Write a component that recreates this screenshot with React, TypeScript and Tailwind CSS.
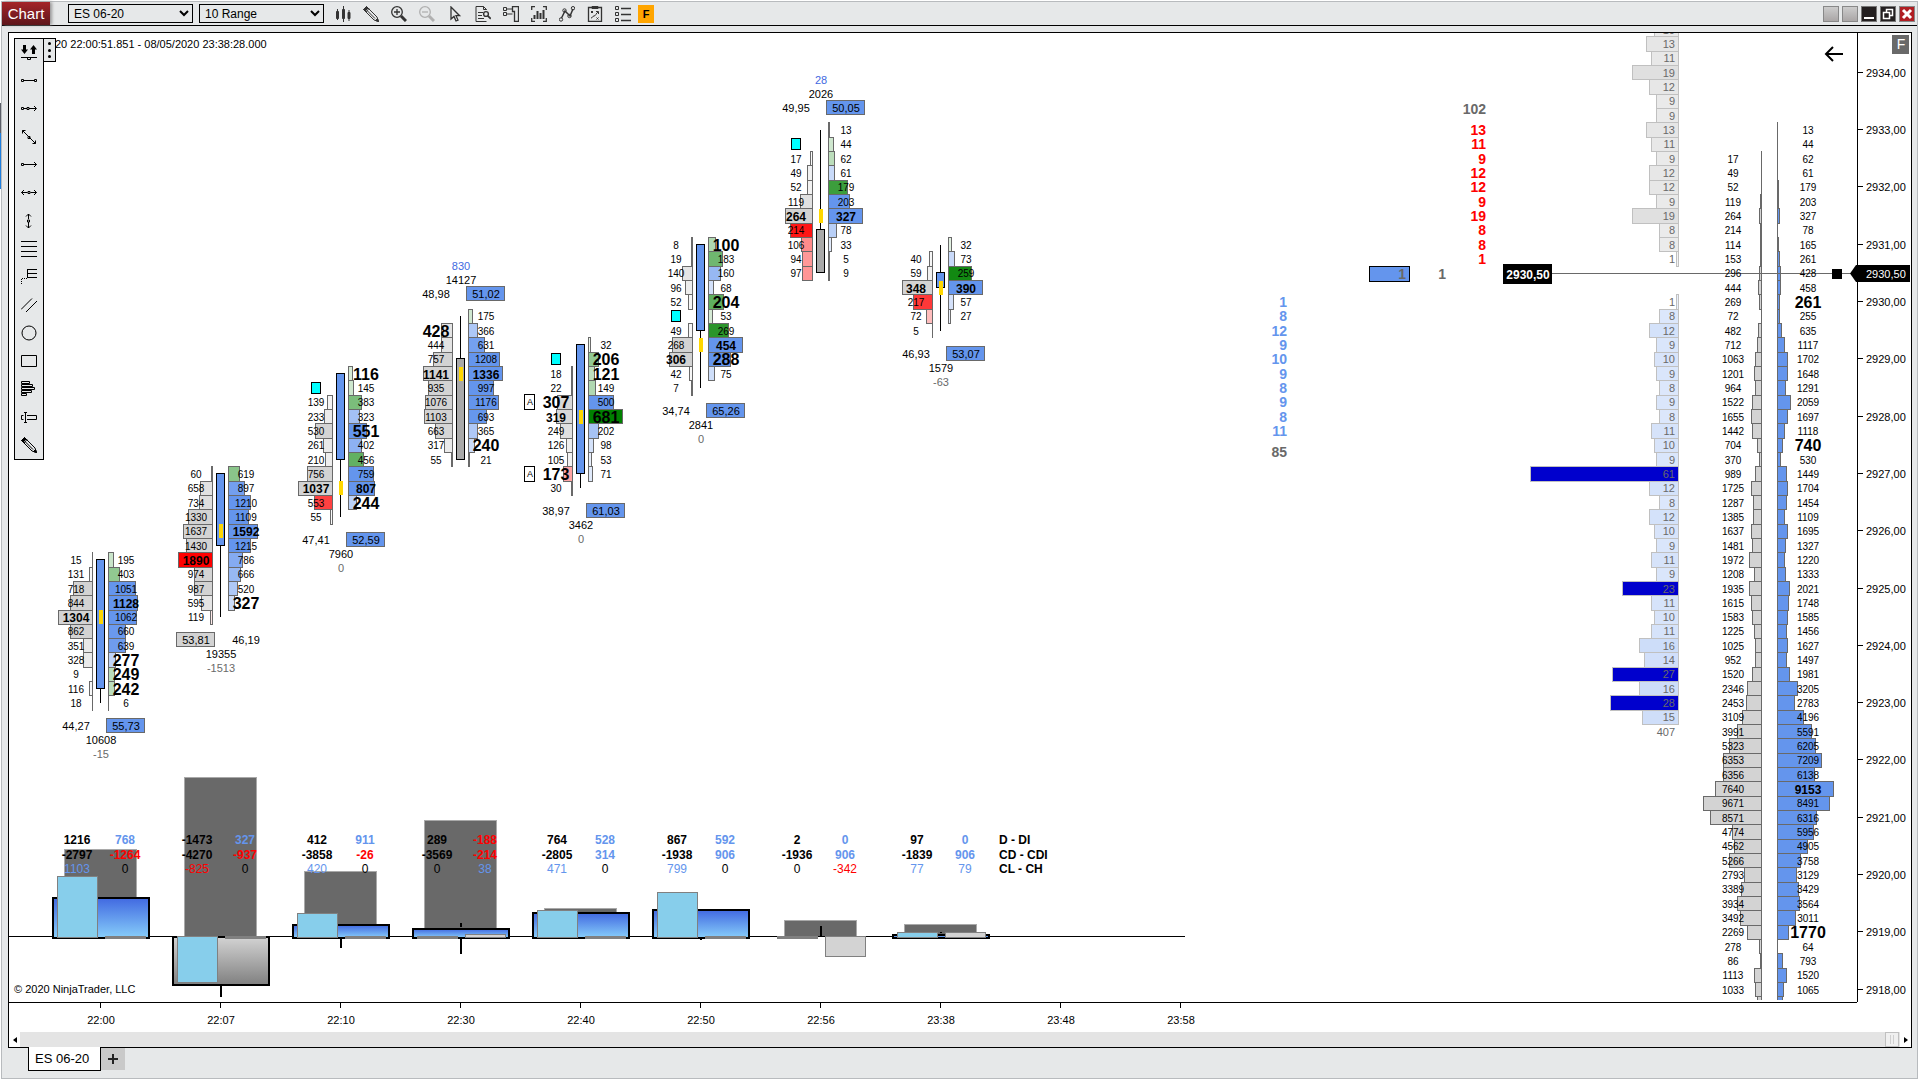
import type { ReactNode } from 'react'

const TICK = 14.328
const rowY = (t: number) => Math.round(72.7 + TICK * t)
const rowTop = (t: number) => Math.floor(72.7 + TICK * (t - 0.5)) + 0.5
const rowH = (t: number) => rowTop(t + 1) - rowTop(t)

// Cell codes: value followed by flags. g = green, r = red, M = bold, L = large bold
type Bar = {
  x: number
  time: string
  bidStart: number
  bid: string
  askStart: number
  ask: string
  body: [number, number]
  wick: [number, number]
  down?: boolean
  poc: number
  cyan?: number
  marks?: number[]
  labelsOnTop?: boolean
  pct: [string, string]
  volume: number
  diff: number
}

const bars: Bar[] = [
  { x: 100, time: '22:00', bidStart: 34, bid: '15 131 718 844 1304M 862 351 328 9 116 18', askStart: 34, ask: '195g 403g 1051 1128M 1062 660 639 277L 249Lg 242Lg 6', body: [34, 43], wick: [34, 44], poc: 38, pct: ['44,27', '55,73'], volume: 10608, diff: -15 },
  { x: 220, time: '22:07', bidStart: 28, bid: '60 658 734 1330 1637 1430 1890Mr 974 987 595 119r', askStart: 28, ask: '619g 897 1210 1109 1592M 1215 786 666 520 327L', body: [28, 33], wick: [28, 38], poc: 32, pct: ['53,81', '46,19'], volume: 19355, diff: -1513 },
  { x: 340, time: '22:10', bidStart: 23, bid: '139 233 530 261 210 756 1037M 553r 55', askStart: 21, ask: '116Lg 145g 383g 323 551L 402 456g 759 807M 244L', body: [21, 27], wick: [21, 31], poc: 29, cyan: 22, pct: ['47,41', '52,59'], volume: 7960, diff: 0 },
  { x: 460, time: '22:30', bidStart: 18, bid: '428L 444 757 1141M 935 1076 1103 663 317 55', askStart: 17, ask: '175g 366 631 1208 1336M 997 1176 693 365 240L 21', body: [20, 27], wick: [17, 27], down: true, poc: 21, labelsOnTop: true, pct: ['48,98', '51,02'], volume: 14127, diff: 830 },
  { x: 580, time: '22:40', bidStart: 21, bid: '18 22 307L 319M 249 126 105 173Lr 30', askStart: 19, ask: '32g 206Lg 121Lg 149g 500 681Lg 202 98 53 71', body: [19, 28], wick: [19, 29], poc: 24, cyan: 20, marks: [23, 28], pct: ['38,97', '61,03'], volume: 3462, diff: 0 },
  { x: 700, time: '22:50', bidStart: 12, bid: '8 19 140 96 52 - 49 268 306M 42 7', askStart: 12, ask: '100Lg 183g 160 68 204Lg 53g 269g 454M 288L 75', body: [12, 18], wick: [12, 22], poc: 19, cyan: 17, pct: ['34,74', '65,26'], volume: 2841, diff: 0 },
  { x: 820, time: '22:56', bidStart: 6, bid: '17 49 52 119 264M 214r 106r 94r 97r', askStart: 4, ask: '13g 44g 62g 61 179g 203 327M 78 33 5 9', body: [11, 14], wick: [4, 14], down: true, poc: 10, cyan: 5, labelsOnTop: true, pct: ['49,95', '50,05'], volume: 2026, diff: 28 },
  { x: 940, time: '23:38', bidStart: 13, bid: '40 59 348M 217r 72r 5', askStart: 12, ask: '32g 73 259g 390M 57 27', body: [14, 15], wick: [12, 18], poc: 15, pct: ['46,93', '53,07'], volume: 1579, diff: -63 },
]

// per bar: delta / divergence, cumulative, close-low / close-high
const deltas = [
  { d: [1216, 768], cd: [-2797, -1264], c: [1103, 0], wick: [0, 0] },
  { d: [-1473, 327], cd: [-4270, -937], c: [-825, 0], wick: [0, 61] },
  { d: [412, 911], cd: [-3858, -26], c: [420, 0], wick: [0, 12] },
  { d: [289, -188], cd: [-3569, -214], c: [0, 38], wick: [-13, 18] },
  { d: [764, 528], cd: [-2805, 314], c: [471, 0], wick: [0, 0] },
  { d: [867, 592], cd: [-1938, 906], c: [799, 0], wick: [0, 4] },
  { d: [2, 0], cd: [-1936, 906], c: [0, -342], wick: [-10, 0] },
  { d: [97, 0], cd: [-1839, 906], c: [77, 79], wick: [-4, 0] },
]

const profileBid = [17, 49, 52, 119, 264, 214, 114, 153, 296, 444, 269, 72, 482, 712, 1063, 1201, 964, 1522, 1655, 1442, 704, 370, 989, 1725, 1287, 1385, 1637, 1481, 1972, 1208, 1935, 1615, 1583, 1225, 1025, 952, 1520, 2346, 2453, 3109, 3991, 5323, 6353, 6356, 7640, 9671, 8571, 4774, 4562, 5266, 2793, 3389, 3934, 3492, 2269, 278, 86, 1113, 1033]
const profileAsk = [13, 44, 62, 61, 179, 203, 327, 78, 165, 261, 428, 458, 261, 255, 635, 1117, 1702, 1648, 1291, 2059, 1697, 1118, 740, 530, 1449, 1704, 1454, 1109, 1695, 1327, 1220, 1333, 2021, 1748, 1585, 1456, 1627, 1497, 1981, 3205, 2783, 4196, 5591, 6205, 7209, 6138, 9153, 8491, 6316, 5956, 4905, 3758, 3129, 3429, 3564, 3011, 1770, 64, 793, 1520, 1065]
const profileStyle: Record<number, string> = { 16: 'text-[16px] font-bold', 26: 'text-[16px] font-bold', 50: 'text-[12px] font-bold', 60: 'text-[16px] font-bold' }

const bookAsks = [10, 13, 11, 19, 12, 9, 9, 13, 11, 9, 12, 12, 9, 19, 8, 8, 1]
const bookBids = [1, 8, 12, 9, 10, 9, 8, 9, 8, 11, 10, 9, 61, 12, 8, 12, 10, 9, 11, 9, 23, 11, 10, 11, 16, 14, 27, 16, 28, 15]
const nearAsks = [13, 11, 9, 12, 12, 9, 19, 8, 8, 1]
const nearBids = [1, 8, 12, 9, 10, 9, 8, 9, 8, 11]

type TProps = { x: number; y: number; cls?: string; anchor?: 'start' | 'middle' | 'end'; children: ReactNode }

function T({ x, y, cls = 'text-[11px]', anchor = 'middle', children }: TProps) {
  return (
    <text x={x} y={y} dy="0.38em" textAnchor={anchor} className={cls}>
      {children}
    </text>
  )
}

function parseCells(src: string) {
  return src.split(' ').map((s) => ({
    value: parseInt(s, 10),
    green: s.includes('g'),
    red: s.includes('r'),
    size: s.includes('L') ? 'text-[16px] font-bold' : s.includes('M') ? 'text-[12px] font-bold' : 'text-[10px]',
  }))
}

function Cells({ src, start, x, side, max }: { src: string; start: number; x: number; side: 'bid' | 'ask'; max: number }) {
  const edge = side === 'bid' ? x - 7.5 : x + 8.5
  const textX = side === 'bid' ? x - 24 : x + 26
  const cells = parseCells(src)
  return (
    <g>
      {cells.map((c, i) => {
        if (isNaN(c.value)) return null
        const t = start + i
        const ratio = c.value / max
        const w = Math.round(ratio * 34)
        const fill = c.green ? '#008000' : c.red ? '#ff0000' : side === 'bid' ? '#d3d3d3' : '#6495ed'
        const opacity = Math.min(1, ratio * (c.green || c.red ? 1.4 : 1.9))
        return (
          <rect
            key={i}
            x={side === 'bid' ? edge - w : edge}
            y={rowTop(t)}
            width={w || 0.1}
            height={rowH(t)}
            fill={fill}
            fillOpacity={opacity}
            stroke="#696969"
            shapeRendering="crispEdges"
          />
        )
      })}
      {cells.map((c, i) =>
        isNaN(c.value) ? null : (
          <T key={i} x={textX} y={rowY(start + i)} cls={c.size}>
            {c.value}
          </T>
        )
      )}
    </g>
  )
}

function FootprintBar({ bar }: { bar: Bar }) {
  const { x } = bar
  const max = Math.max(...parseCells(bar.bid + ' ' + bar.ask).map((c) => c.value || 0))
  const bidRows = bar.bid.split(' ').length
  const askRows = bar.ask.split(' ').length
  const last = Math.max(bar.bidStart + bidRows, bar.askStart + askRows) - 1
  const first = Math.min(bar.bidStart, bar.askStart)
  const dir = bar.labelsOnTop ? -1 : 1
  const base = bar.labelsOnTop ? rowY(first) - 22 : rowY(last) + 23
  const bidWins = bar.pct[0] > bar.pct[1]
  const diffColor = bar.labelsOnTop ? '#4169e1' : '#696969'
  return (
    <g>
      <Cells src={bar.bid} start={bar.bidStart} x={x} side="bid" max={max} />
      <Cells src={bar.ask} start={bar.askStart} x={x} side="ask" max={max} />
      <g shapeRendering="crispEdges">
        <path d={`M${x + 0.5} ${rowY(bar.wick[0])}V${rowY(bar.wick[1])}`} stroke="#000" />
        <rect
          x={x - 3.5}
          y={rowY(bar.body[0]) - 0.5}
          width={8}
          height={rowY(bar.body[1]) - rowY(bar.body[0])}
          fill={bar.down ? '#a9a9a9' : '#6495ed'}
          stroke="#000"
        />
        <rect x={x - 1} y={rowY(bar.poc) - 7} width={4} height={14} fill="#ffd700" />
        {bar.cyan && <rect x={x - 28.5} y={rowY(bar.cyan) - 5.5} width={9} height={11} fill="#00ffff" stroke="#000" />}
        {bar.marks?.map((t) => (
          <rect key={t} x={x - 55.5} y={rowY(t) - 7.5} width={10} height={15} fill="#fff" stroke="#000" />
        ))}
        <rect x={bidWins ? x - 43.5 : x + 6.5} y={base - 7.5} width={38} height={14} fill={bidWins ? '#d3d3d3' : '#6495ed'} stroke="#696969" />
      </g>
      {bar.marks?.map((t) => (
        <T key={t} x={x - 50} y={rowY(t)} cls="text-[9px]">A</T>
      ))}
      <T x={x - 24} y={base}>{bar.pct[0]}</T>
      <T x={x + 26} y={base}>{bar.pct[1]}</T>
      <T x={x + 1} y={base + 14 * dir}>{bar.volume}</T>
      <g fill={diffColor}>
        <T x={x + 1} y={base + 28 * dir}>{bar.diff}</T>
      </g>
    </g>
  )
}

const ZERO = 936
const tone = (v: number) => (v < 0 ? '#ff0000' : '#6495ed')

function SideBar({ x, v, fill }: { x: number; v: number; fill: string }) {
  const h = Math.max(1, Math.round(Math.abs(v) * 0.0545))
  return <rect x={x + 0.5} y={v > 0 ? ZERO - h + 0.5 : ZERO + 0.5} width={40} height={v > 0 ? h + 1 : h + 1} fill={v === 0 ? '#808080' : fill} stroke="#808080" />
}

function DeltaBar({ index }: { index: number }) {
  const { x, volume } = bars[index]
  const { d, cd, c, wick } = deltas[index]
  const vol = Math.round(volume * 0.00827) - 1
  const body = Math.round(Math.abs(d[0]) * 0.0325)
  const up = d[0] > 0
  return (
    <g>
      <g shapeRendering="crispEdges">
        <rect x={x - 35.5} y={ZERO - vol + 0.5} width={72} height={vol} fill="#696969" stroke="#a9a9a9" />
        <path d={`M${x - 48} ${ZERO + 0.5}H${x + 50}`} stroke="#000" />
        <rect x={x - 47} y={up ? ZERO - body + 2 : ZERO + 1} width={96} height={body} fill={up ? 'url(#deltaUp)' : 'url(#deltaDown)'} stroke="#000" strokeWidth={2} />
        {wick[0] < 0 && <path d={`M${x + 1} ${ZERO + wick[0]}V${ZERO - Math.min(body, 9)}`} stroke="#000" strokeWidth={2} />}
        {wick[1] > 0 && <path d={`M${x + 1} ${up ? ZERO + 2 : ZERO + body}V${ZERO + wick[1]}`} stroke="#000" strokeWidth={2} />}
        <SideBar x={x - 43} v={c[0]} fill="#87ceeb" />
        <SideBar x={x + 5} v={c[1]} fill="#d3d3d3" />
      </g>
      <T x={x - 23} y={839} cls="text-[12px] font-bold">{d[0]}</T>
      <T x={x - 23} y={854} cls="text-[12px] font-bold">{cd[0]}</T>
      <g fill={c[0] === 0 ? '#000' : tone(c[0])}>
        <T x={x - 23} y={868} cls="text-[12px]">{c[0]}</T>
      </g>
      <g fill={tone(d[1])}>
        <T x={x + 25} y={839} cls="text-[12px] font-bold">{d[1]}</T>
      </g>
      <g fill={tone(cd[1])}>
        <T x={x + 25} y={854} cls="text-[12px] font-bold">{cd[1]}</T>
      </g>
      <g fill={c[1] === 0 ? '#000' : tone(c[1])}>
        <T x={x + 25} y={868} cls="text-[12px]">{c[1]}</T>
      </g>
    </g>
  )
}

function FootprintPlot() {
  return (
    <svg width={1191} height={969} viewBox="9 33 1191 969" className="shrink-0" role="img" aria-label="Footprint chart">
      <defs>
        <linearGradient id="deltaUp" x1="0" y1="0" x2="0" y2="1">
          <stop offset="0" stopColor="#4169e1" />
          <stop offset="1" stopColor="#87cefa" />
        </linearGradient>
        <linearGradient id="deltaDown" x1="0" y1="0" x2="0" y2="1">
          <stop offset="0" stopColor="#d3d3d3" />
          <stop offset="1" stopColor="#808080" />
        </linearGradient>
      </defs>
      <T x={55} y={44} anchor="start">20 22:00:51.851 - 08/05/2020 23:38:28.000</T>
      {bars.map((bar) => (
        <FootprintBar key={bar.time} bar={bar} />
      ))}
      <path d={`M9 ${ZERO + 0.5}H1185`} stroke="#000" />
      {bars.map((bar, i) => (
        <DeltaBar key={bar.time} index={i} />
      ))}
      <T x={999} y={839} cls="text-[12px] font-bold" anchor="start">D - DI</T>
      <T x={999} y={854} cls="text-[12px] font-bold" anchor="start">CD - CDI</T>
      <T x={999} y={868} cls="text-[12px] font-bold" anchor="start">CL - CH</T>
      <T x={14} y={989} anchor="start">© 2020 NinjaTrader, LLC</T>
    </svg>
  )
}

function BookRow({ value, tick, bid }: { value: number; tick: number; bid?: boolean }) {
  const w = Math.round(value * 2.43)
  const big = value > 20
  return (
    <g>
      <rect
        x={1678.5 - w}
        y={rowTop(tick)}
        width={w}
        height={rowH(tick)}
        fill={big ? '#0000cd' : bid ? '#6495ed' : '#a9a9a9'}
        fillOpacity={big ? 1 : 0.13 + value * 0.012}
        stroke="#c0c0c0"
        shapeRendering="crispEdges"
      />
      <g fill="#696969">
        <T x={1675} y={rowY(tick)} anchor="end">{value}</T>
      </g>
    </g>
  )
}

function DepthPlot() {
  return (
    <svg width={640} height={969} viewBox="1217 33 640 969" className="shrink-0" role="img" aria-label="Market depth and volume profile">
      {bookAsks.map((v, i) => (
        <BookRow key={i} value={v} tick={i - 3} />
      ))}
      {bookBids.map((v, i) => (
        <BookRow key={i} value={v} tick={i + 16} bid />
      ))}
      <g fill="#696969">
        <T x={1675} y={rowY(46)} anchor="end">407</T>
      </g>

      <g fill="#696969">
        <T x={1486} y={109} cls="text-[14px] font-bold" anchor="end">102</T>
        <T x={1287} y={452} cls="text-[14px] font-bold" anchor="end">85</T>
      </g>
      <g fill="#ff0000">
        {nearAsks.map((v, i) => (
          <T key={i} x={1486} y={rowY(i + 4)} cls="text-[14px] font-bold" anchor="end">{v}</T>
        ))}
      </g>
      <g fill="#6495ed">
        {nearBids.map((v, i) => (
          <T key={i} x={1287} y={rowY(i + 16)} cls="text-[14px] font-bold" anchor="end">{v}</T>
        ))}
      </g>

      <rect x={1369.5} y={266.5} width={40} height={15} fill="#6495ed" stroke="#000" />
      <g fill="#696969">
        <T x={1406} y={274} cls="text-[14px] font-bold" anchor="end">1</T>
        <T x={1446} y={274} cls="text-[14px] font-bold" anchor="end">1</T>
      </g>

      <g shapeRendering="crispEdges">
        {profileBid.map((v, i) => {
          const w = Math.round(v * 0.006)
          return <rect key={i} x={1761.5 - w} y={rowTop(i + 6)} width={w || 0.1} height={rowH(i + 6)} fill="#d3d3d3" stroke="#696969" />
        })}
        {profileAsk.map((v, i) => {
          const w = Math.round(v * 0.0061)
          return <rect key={i} x={1777.5} y={rowTop(i + 4)} width={w || 0.1} height={rowH(i + 4)} fill="#6495ed" stroke="#696969" />
        })}
        <path d="M1761.5 1000V996.5H1757.5V1000" fill="#d3d3d3" stroke="#696969" />
        <path d="M1777.5 1000V996.5H1782.5V1000" fill="#6495ed" stroke="#696969" />
      </g>
      <path d="M1552 273.5H1857" stroke="#696969" />
      {profileBid.map((v, i) => (
        <T key={i} x={1733} y={rowY(i + 6)} cls="text-[10px]">{v}</T>
      ))}
      {profileAsk.map((v, i) => (
        <T key={i} x={1808} y={rowY(i + 4)} cls={profileStyle[i + 4] ?? 'text-[10px]'}>{v}</T>
      ))}

      <rect x={1503} y={264} width={49} height={20} />
      <g fill="#fff">
        <T x={1528} y={274} cls="text-[12px] font-bold">2930,50</T>
      </g>
      <rect x={1832} y={269} width={10} height={10} />
      <path d="M1843 54H1826M1833 47l-7 7 7 7" fill="none" stroke="#000" strokeWidth={2} />
    </svg>
  )
}

function PriceAxis() {
  const prices = Array.from({ length: 17 }, (_, i) => 2934 - i)
  return (
    <svg width={54} height={969} viewBox="1857 33 54 969" className="relative shrink-0 overflow-visible">
      <path d="M1857.5 33V1002" stroke="#000" />
      {prices.map((p, i) => (
        <g key={p}>
          <path d={`M1858 ${rowY(i * 4) - 0.5}h5`} stroke="#000" />
          <T x={1866} y={rowY(i * 4)} anchor="start">{p},00</T>
        </g>
      ))}
      <path d="M1850 273.5L1856 265H1910V282H1856Z" />
      <g fill="#fff">
        <T x={1866} y={274} anchor="start">2930,50</T>
      </g>
      <rect x={1892} y={35} width={17} height={19} fill="#696969" />
      <g fill="#fff">
        <T x={1901} y={44} cls="text-[14px]">F</T>
      </g>
    </svg>
  )
}

function TimeAxis() {
  const times = [...bars.map((b) => b.time), '23:48', '23:58']
  return (
    <svg width={1848} height={30} viewBox="9 1002 1848 30" className="shrink-0">
      {times.map((t, i) => (
        <g key={t}>
          <path d={`M${100.5 + i * 120} 1002v5`} stroke="#000" />
          <T x={101 + i * 120} y={1019}>{t}</T>
        </g>
      ))}
    </svg>
  )
}

function ToolIcon({ children }: { children: ReactNode }) {
  return (
    <svg width={16} height={16} viewBox="0 0 16 16" fill="none" stroke="currentColor">
      {children}
    </svg>
  )
}

const pencil = (
  <>
    <path d="M.5 3.500L3.500 .5 14 11l1.500 4.500L11 14z" />
    <path d="M4 4.500l8 8M6 2.500L3 6" />
    <path d="M.5 3.500L3.500 .5l1.500 1.500-3 3zM15.500 15.500L12.500 14.500l2-2z" fill="currentColor" />
  </>
)

const toolbarIcons = [
  { name: 'Chart style', icon: <><path d="M2.500 3v11M8.500 0v16M14 4v11" /><path d="M1.500 5.500h2v7h-2zM7.500 3.500h2v9h-2zM13 6.500h2v6h-2z" fill="currentColor" /></> },
  { name: 'Drawing tools', icon: pencil },
  { name: 'Zoom in', icon: <><circle cx="6" cy="6" r="5.300" strokeWidth="1.300" /><path d="M6 3v6M3 6h6" strokeWidth="1.300" /><path d="M10 10l5 5" strokeWidth="3" /></> },
  { name: 'Zoom out', muted: true, icon: <><circle cx="6" cy="6" r="5.300" strokeWidth="1.300" /><path d="M3 6h6" strokeWidth="1.300" /><path d="M10 10l5 5" strokeWidth="3" /></> },
  { name: 'Cursor', icon: <path d="M4 1v12l3-2.600 2 4.600 2-.9-2-4.400h3.600z" strokeWidth="1.300" /> },
  { name: 'Data box', icon: <><path d="M11.500 4V3.500L8.500 .5H1v15h10.500" /><path d="M8.500 .5v3h3M3 6.500h5M3 9.500h4M3 12.500h6" /><circle cx="11" cy="8" r="2.400" strokeWidth="1.400" /><path d="M12.800 9.800l3 3" strokeWidth="1.800" /></> },
  { name: 'Chart trader', icon: <><path d="M.5 1.500h3v3h-3zM.5 6.500h3v3h-3zM3.500 3h6M3.500 8h6" /><path d="M9.500 .5h6v15h-4v-10h-2z" strokeWidth="1.300" /></> },
  { name: 'Data series', icon: <><path d="M4 .7H.7V4M12 .7h3.300V4M4 15.300H.7V12M12 15.300h3.300V12" strokeWidth="1.300" /><path d="M3.500 9v4M6.500 5v8M9.500 7v6M12.500 4v9" strokeWidth="2" /></> },
  { name: 'Indicators', icon: <><path d="M2.500 12L6 5l5 5 3-7" strokeWidth="1.500" /><circle cx="2" cy="13.500" r="1.700" /><circle cx="5.500" cy="4.500" r="1.700" /><circle cx="10.500" cy="10" r="1.700" /><circle cx="14" cy="2.200" r="1.700" /></> },
  { name: 'Strategies', icon: <><path d="M1.500 1.500h13v14h-13z" strokeWidth="1.300" /><path d="M5 .5h6v2H5zM4 5l2 2M6 5L4 7M9.500 11.500l2 2M11.500 11.500l-2 2M4 12c2 0 1-2 3-2s2-3 4-4M9 5.500h2.500V8" /></> },
  { name: 'Properties', icon: <><path d="M.5 .5h3v3h-3zM.5 6.500h3v3h-3zM.5 12.500h3v3h-3z" /><path d="M6 2.500h10M6 8.500h10M6 14.500h10" strokeWidth="1.300" /></> },
]

const paletteIcons = [
  { name: 'Snap mode', icon: <><path d="M3.500 0v5M12.500 9V4" strokeWidth="3" /><path d="M0 4.500h7L3.500 9zM9 4.500h7L12.500 0z" fill="currentColor" stroke="none" /><path d="M0 12.500h16M6.500 12.500v2h3v-2" /></> },
  { name: 'Line', icon: <path d="M.5 6.500h2v2h-2zM13.500 6.500h2v2h-2zM2.500 7.500h11" /> },
  { name: 'Extended arrow', icon: <path d="M.5 6.500h2v2h-2zM6 6.500h2v2H6zM2.500 7.500H6M8 7.500h7M13 5l2.500 2.500L13 10" /> },
  { name: 'Diagonal', icon: <path d="M1.500 1.500l13 13M1.500 4.500v-3h3M14.500 11.500v3h-3M7 7.500h2v2H7z" /> },
  { name: 'Ray', icon: <path d="M.5 6.500h2v2h-2zM2.500 7.500h13M13 5l2.500 2.500L13 10" /> },
  { name: 'Horizontal line', icon: <path d="M.5 7.500h6M9.500 7.500h6M7 6.500h2v2H7zM3 5L.5 7.500 3 10M13 5l2.500 2.500L13 10" /> },
  { name: 'Vertical line', icon: <path d="M7.500 1v5M7.500 9v6M6.500 7h2v2h-2zM5 3.500L7.500 1 10 3.500M5 12.500L7.500 15l2.500-2.500" /> },
  { name: 'Fibonacci levels', icon: <path d="M0 .5h16M0 5.500h16M0 10.500h16M0 15.500h16" /> },
  { name: 'Fibonacci extension', icon: <><path d="M6.500 0v9M6.500 .5H16M6.500 4.500H16M6.500 8.500H16" /><path d="M6 9.500H.5V16" strokeDasharray="1 1" /></> },
  { name: 'Channel', icon: <path d="M0 12.500L11 1.500M5 15L16 4" /> },
  { name: 'Ellipse', icon: <circle cx="8" cy="8" r="7" /> },
  { name: 'Rectangle', icon: <path d="M.5 2.500h15v11H.5z" /> },
  { name: 'Volume profile', icon: <path d="M.5 .5h8v2h-8zM.5 3.500h11v2H.5zM.5 6.500h13v2H.5zM.5 9.500h10v2H.5zM.5 12.500h5v2h-5z" /> },
  { name: 'Risk box', icon: <path d="M2.500 6.500h-2v4h2M6 6.500h9.500v4H6M4.500 4v9M3 3.500h3M3 13.500h3" /> },
  { name: 'Brush', icon: pencil },
]

function ToolPalette() {
  return (
    <div className="absolute left-[5px] top-[5px] flex items-start">
      <div className="flex flex-col border border-black bg-[#e6e8e9]">
        {paletteIcons.map((item) => (
          <button key={item.name} aria-label={item.name} className="flex h-7 w-7 items-center justify-center text-black">
            <ToolIcon>{item.icon}</ToolIcon>
          </button>
        ))}
      </div>
      <div className="-ml-px flex h-6 w-[13px] flex-col items-center justify-evenly border border-black bg-[#e6e8e9]">
        <span className="size-[3px] rounded-full bg-black" />
        <span className="size-[3px] rounded-full bg-black" />
        <span className="size-[3px] rounded-full bg-black" />
      </div>
    </div>
  )
}

function Picker({ label, options, className }: { label: string; options: string[]; className?: string }) {
  return (
    <div className={`relative flex ${className ?? ''}`}>
      <select aria-label={label} className="h-[19px] w-[125px] appearance-none border border-black bg-[#e6e8e9] px-[5px] text-[12px] leading-[16px] text-black">
        {options.map((o) => (
          <option key={o}>{o}</option>
        ))}
      </select>
      <svg width={10} height={7} viewBox="0 0 10 7" className="pointer-events-none absolute right-1 top-1.5" fill="none" stroke="#000" strokeWidth={2}>
        <path d="M1 1l4 4 4-4" />
      </svg>
    </div>
  )
}

function Toolbar() {
  return (
    <header className="flex h-6 items-center border-b border-black">
      <button className="h-full w-12 bg-linear-to-b from-[#a52428] to-[#5e161b] text-[15px] leading-5 text-white shadow-[2px_0_3px_#999]">Chart</button>
      <Picker label="Instrument" options={['ES 06-20']} className="ml-[18px]" />
      <Picker label="Interval" options={['10 Range']} className="ml-1.5" />
      <nav className="ml-[5px] flex text-[#333]">
        {toolbarIcons.map((item) => (
          <button key={item.name} aria-label={item.name} className={`flex w-7 items-center justify-center ${item.muted ? 'text-[#b0b0b0]' : ''}`}>
            <ToolIcon>{item.icon}</ToolIcon>
          </button>
        ))}
      </nav>
      <button className="ml-px h-[18px] w-4 bg-[#ffa500] text-[11px] font-bold leading-[18px] text-black">F</button>
      <div className="ml-auto mr-0.5 flex gap-[3px]">
        <button aria-label="Link instrument" className="size-4 border border-[#888] bg-linear-to-b from-[#ccc] to-[#aaa6a6]" />
        <button aria-label="Link interval" className="size-4 border border-[#888] bg-linear-to-b from-[#ccc] to-[#aaa6a6]" />
        <button aria-label="Minimize" className="flex size-4 items-center justify-center border border-[#777] bg-[#231f20] text-white">
          <svg width={12} height={12} viewBox="0 0 12 12"><path d="M1 10h10" stroke="#fff" strokeWidth={2} /></svg>
        </button>
        <button aria-label="Restore" className="flex size-4 items-center justify-center border border-[#777] bg-[#231f20]">
          <svg width={12} height={12} viewBox="0 0 12 12" fill="none" stroke="#fff" strokeWidth={1.5}><path d="M4.500 4.500v-3h6v6h-3M1.500 4.500h6v6h-6z" /></svg>
        </button>
        <button aria-label="Close" className="flex size-4 items-center justify-center border border-[#888] bg-[#b01e23]">
          <svg width={12} height={12} viewBox="0 0 12 12"><path d="M2 2l8 8M10 2l-8 8" stroke="#fff" strokeWidth={3} /></svg>
        </button>
      </div>
    </header>
  )
}

function ScrollBar() {
  return (
    <div className="flex h-[15px] bg-[#e4e4e4]">
      <button aria-label="Scroll left" className="flex w-[11px] items-center justify-center bg-white">
        <svg width={4} height={6} viewBox="0 0 4 6"><path d="M4 0v6L0 3z" /></svg>
      </button>
      <div className="ml-auto flex w-[14px] justify-center gap-0.5 border border-[#c0c0c0] bg-[#f0f0f0] py-0.5">
        <span className="w-px bg-[#d0d0d0]" />
        <span className="w-px bg-[#d0d0d0]" />
      </div>
      <button aria-label="Scroll right" className="ml-px flex w-[11px] items-center justify-center bg-white">
        <svg width={4} height={6} viewBox="0 0 4 6"><path d="M0 0v6l4-3z" /></svg>
      </button>
    </div>
  )
}

export default function App() {
  return (
    <div className="flex min-h-screen bg-white pb-px pt-px font-['Liberation_Sans',Arial,sans-serif] text-black">
      <div className="w-px pt-[102px]">
        <div className="h-[30px] bg-[#5a5d66]" />
        <div className="h-14 bg-[#1e7fe0]" />
      </div>
      <div className="mr-px flex min-w-0 flex-1 flex-col border border-[#b8bbbe] bg-[#e6e8e9]">
        <Toolbar />
        <main className="ml-1.5 mr-[5px] mt-1.5 border border-black bg-white">
          <div className="relative flex">
            <div className="flex min-w-0 flex-1 justify-between overflow-hidden">
              <FootprintPlot />
              <DepthPlot />
            </div>
            <PriceAxis />
            <ToolPalette />
          </div>
          <div className="mr-[54px] h-[30px] overflow-hidden border-t border-black">
            <TimeAxis />
          </div>
          <ScrollBar />
        </main>
        <footer className="ml-[26px] flex flex-1 items-start">
          <button className="-mt-px h-6 w-[73px] border-x border-b border-black bg-white px-1.5 text-left text-[13px] leading-5">ES 06-20</button>
          <button aria-label="Add tab" className="flex h-[22px] w-6 items-center justify-center bg-[#c9c9c9]">
            <svg width={12} height={12} viewBox="0 0 12 12"><path d="M6 1v10M1 6h10" stroke="#222" strokeWidth={2} /></svg>
          </button>
        </footer>
      </div>
    </div>
  )
}
